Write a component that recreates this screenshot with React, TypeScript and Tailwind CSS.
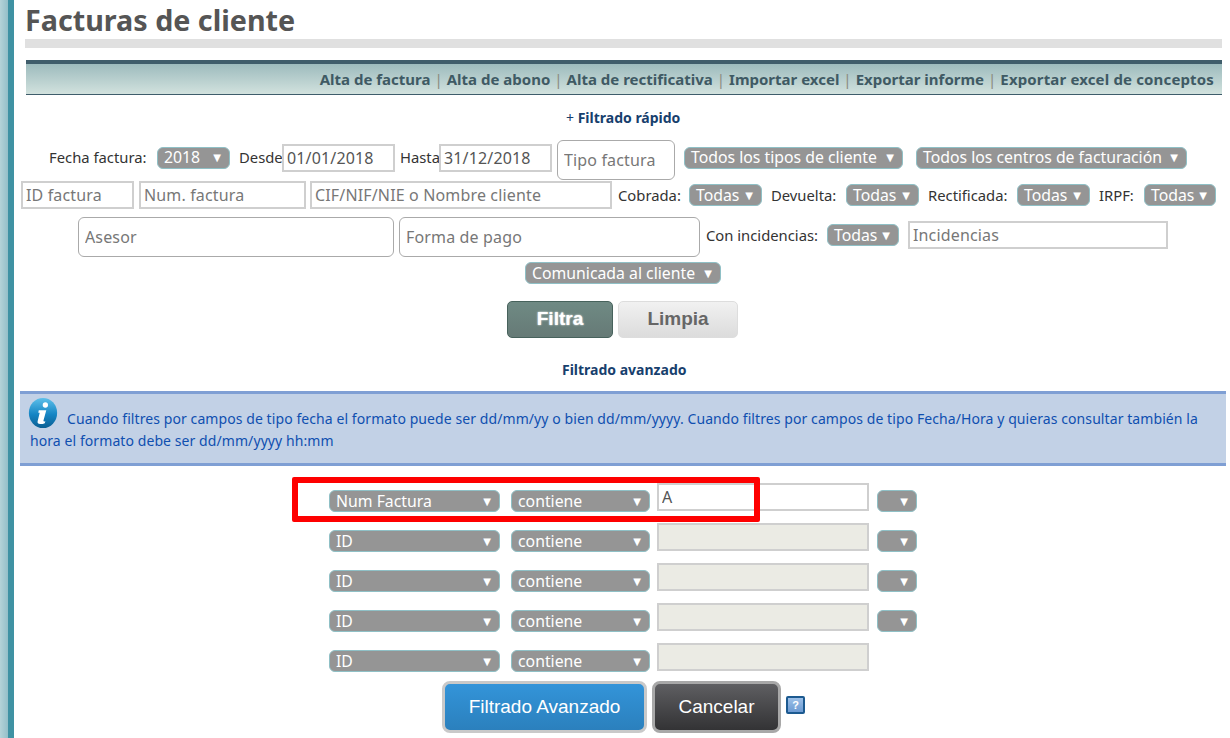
const FONT = "font-['Tahoma','Noto_Sans','DejaVu_Sans',sans-serif]";
const ARIAL = "font-['Liberation_Sans',Arial,sans-serif]";

function Pick({ text, className }: { text: string; className: string }) {
  return (
    <div
      className={`flex h-[22px] shrink-0 items-center justify-between rounded-[6px] border border-[#8fc0c6] bg-[#959595] pl-[6px] pr-[8px] pt-[1px] text-[15.8px] text-white ${className}`}
    >
      <span className="whitespace-nowrap">{text}</span>
      <span className="mb-[2px] text-[10px] leading-none">▼</span>
    </div>
  );
}

function Label({ text, className }: { text: string; className: string }) {
  return <span className={`shrink-0 whitespace-nowrap text-[14.8px] text-[#333] ${className}`}>{text}</span>;
}

function Field({ text, hint, className, disabled }: { text?: string; hint?: string; className: string; disabled?: boolean }) {
  return (
    <input
      readOnly
      defaultValue={text}
      placeholder={hint}
      className={`h-[28px] shrink-0 border-2 border-[#cfcfcf] px-[3px] text-[16px] tracking-[0.15px] text-[#555] outline-none placeholder:text-[#777] ${
        disabled ? "bg-[#ebebe4]" : "bg-white"
      } ${className}`}
    />
  );
}

function RoundField({ hint, className }: { hint: string; className: string }) {
  return (
    <input
      readOnly
      placeholder={hint}
      className={`h-[40px] shrink-0 rounded-[6px] border border-[#aaa] bg-white px-[6px] text-[16px] tracking-[0.15px] outline-none placeholder:text-[#777] ${className}`}
    />
  );
}

function AdvancedRow({ field, value, disabled, last }: { field: string; value?: string; disabled?: boolean; last?: boolean }) {
  return (
    <div className="flex h-[40px] items-start pl-[317px]">
      <Pick text={field} className="mt-[7px] w-[171px]" />
      <Pick text="contiene" className="ml-[11px] mt-[7px] w-[139px]" />
      <Field text={value} disabled={disabled} className="ml-[7px] w-[212px]" />
      {!last && <Pick text="" className="ml-[8px] mt-[7px] w-[40px]" />}
    </div>
  );
}

export default function App() {
  return (
    <div className={`flex h-[738px] w-[1230px] overflow-hidden bg-white ${FONT}`}>
      <div className="flex h-full w-[14px] shrink-0">
        <div className="h-full w-[8px] bg-gradient-to-r from-[#b4d3d8] to-[#94bfc8]" />
        <div className="h-full w-[6px] bg-[#3f92a3]" />
      </div>

      <div className="relative -ml-[2px] min-w-0 flex-1">
        {/* Title */}
        <h1 className="ml-[13px] h-[39px] text-[28.7px] font-bold leading-[40px] text-[#555]">Facturas de cliente</h1>
        <div className="ml-[13px] mr-[8px] h-[9px] bg-[#e0e0e0]" />

        {/* Actions */}
        <div className="ml-[14px] mr-[8px] mt-[12px] flex h-[35px] items-center justify-end border-b border-t-4 border-b-[#3f5d6b] border-t-[#3f5d6b] bg-gradient-to-b from-[#9dbbbd] to-[#d2e2de] pr-[8px] text-[15px] font-bold text-[#3f5a64]">
          <span>Alta de factura</span>
          <span className="mx-[4px] font-normal text-[#8a8a80]">|</span>
          <span>Alta de abono</span>
          <span className="mx-[4px] font-normal text-[#8a8a80]">|</span>
          <span>Alta de rectificativa</span>
          <span className="mx-[4px] font-normal text-[#8a8a80]">|</span>
          <span>Importar excel</span>
          <span className="mx-[4px] font-normal text-[#8a8a80]">|</span>
          <span>Exportar informe</span>
          <span className="mx-[4px] font-normal text-[#8a8a80]">|</span>
          <span className="tracking-[0.15px]">Exportar excel de conceptos</span>
        </div>

        <p className="mt-[14px] h-[18px] pl-[554px] text-[14px] font-bold leading-[18px] text-[#17406d]">
          <span className="font-normal">+</span> Filtrado rápido
        </p>

        {/* Quick filters */}
        <div className="mt-[12px] flex h-[41px] items-center pl-[37px]">
          <Label text="Fecha factura:" className="mb-[4px] w-[108px]" />
          <Pick text="2018" className="mb-[4px] w-[73px]" />
          <Label text="Desde" className="mb-[4px] ml-[9px] w-[43px]" />
          <Field text="01/01/2018" className="mb-[4px] w-[113px] tracking-[0.9px]" />
          <Label text="Hasta" className="mb-[4px] ml-[5px] w-[39px]" />
          <Field text="31/12/2018" className="mb-[4px] w-[113px] tracking-[0.9px]" />
          <RoundField hint="Tipo factura" className="ml-[5px] w-[118px]" />
          <Pick text="Todos los tipos de cliente" className="mb-[4px] ml-[9px] w-[219px]" />
          <Pick text="Todos los centros de facturación" className="mb-[4px] ml-[13px] w-[271px]" />
        </div>
        <div className="mt-[1px] flex h-[28px] items-center pl-[9px]">
          <Field hint="ID factura" className="w-[113px]" />
          <Field hint="Num. factura" className="ml-[5px] w-[167px]" />
          <Field hint="CIF/NIF/NIE o Nombre cliente" className="ml-[4px] w-[302px]" />
          <Label text="Cobrada:" className="ml-[6px] w-[71px]" />
          <Pick text="Todas" className="w-[73px]" />
          <Label text="Devuelta:" className="ml-[9px] w-[75px]" />
          <Pick text="Todas" className="w-[73px]" />
          <Label text="Rectificada:" className="ml-[9px] w-[89px]" />
          <Pick text="Todas" className="w-[73px]" />
          <Label text="IRPF:" className="ml-[9px] w-[45px]" />
          <Pick text="Todas" className="w-[72px]" />
        </div>
        <div className="mt-[8px] flex h-[40px] items-center pl-[66px]">
          <RoundField hint="Asesor" className="w-[316px]" />
          <RoundField hint="Forma de pago" className="ml-[5px] w-[301px]" />
          <Label text="Con incidencias:" className="mb-[4px] ml-[6px] w-[121px]" />
          <Pick text="Todas" className="mb-[4px] w-[72px]" />
          <Field hint="Incidencias" className="mb-[4px] ml-[9px] w-[260px]" />
        </div>
        <div className="mt-[5px] flex pl-[513px]">
          <Pick text="Comunicada al cliente" className="w-[196px]" />
        </div>

        {/* Quick filter buttons */}
        <div className={`mt-[17px] flex pl-[495px] ${ARIAL}`}>
          <button className="h-[37px] w-[106px] rounded-[5px] border border-[#47625c] bg-gradient-to-b from-[#6f8a84] to-[#667a76] text-[19px] font-bold text-white [text-shadow:0_0_2px_#fff]">
            Filtra
          </button>
          <button className="ml-[5px] h-[37px] w-[120px] rounded-[5px] border border-[#ddd] bg-gradient-to-b from-[#f1f1f1] to-[#dcdcdc] text-[19px] font-bold text-[#666]">
            Limpia
          </button>
        </div>

        <p className="mt-[23px] h-[18px] pl-[550px] text-[14px] font-bold leading-[18px] text-[#17406d]">Filtrado avanzado</p>

        {/* Info */}
        <div className="ml-[8px] mr-[4px] mt-[12px] h-[75px] border-y-[3px] border-[#7f9fd4] bg-[#c2d1e6] pl-[7px] text-[14px] leading-[22px] tracking-[0.08px] text-[#0f4fb0]">
          <div className="flex items-start pt-[3px]">
            <svg viewBox="0 0 32 34" className="h-[32px] w-[32px] shrink-0">
              <defs>
                <linearGradient id="info-ball" x1="0" y1="0" x2="0" y2="1">
                  <stop offset="0" stopColor="#5ec0ea" />
                  <stop offset="0.55" stopColor="#1585c4" />
                  <stop offset="1" stopColor="#0b5f93" />
                </linearGradient>
              </defs>
              <ellipse cx="16" cy="17" rx="15" ry="16" fill="url(#info-ball)" />
              <circle cx="18.5" cy="8.5" r="2.8" fill="#fff" />
              <path d="M11.5 14 h8 l-3 11 q-.3 1.3 2 .8 l-.6 2 q-2 1-5 1 q-3.2-.2-2.6-3 l2.2-9 h-1.5z" fill="#fff" />
            </svg>
            <p className="mt-[11px] whitespace-nowrap pl-[8px]">
              Cuando filtres por campos de tipo fecha el formato puede ser dd/mm/yy o bien dd/mm/yyyy. Cuando filtres por campos de tipo Fecha/Hora y quieras consultar también la
            </p>
          </div>
          <p className="ml-[3px]">hora el formato debe ser dd/mm/yyyy hh:mm</p>
        </div>

        {/* Advanced filters */}
        <div className="mt-[17px]">
          <AdvancedRow field="Num Factura" value="A" />
          <AdvancedRow field="ID" disabled />
          <AdvancedRow field="ID" disabled />
          <AdvancedRow field="ID" disabled />
          <AdvancedRow field="ID" disabled last />
        </div>

        <div className={`-mt-[2px] flex items-center pl-[430px] ${ARIAL}`}>
          <button className="h-[52px] w-[205px] rounded-[8px] border-[3px] border-[#c9c9c9] bg-gradient-to-b from-[#3394d9] to-[#2b80bd] text-[19px] text-white">
            Filtrado Avanzado
          </button>
          <button className="ml-[5px] h-[52px] w-[129px] rounded-[8px] border-[3px] border-[#a8a8a8] bg-gradient-to-b from-[#5f5f62] to-[#333335] text-[19px] text-white">
            Cancelar
          </button>
          <span className="mb-[4px] ml-[5px] flex h-[18px] w-[19px] items-center justify-center rounded-[2px] border-2 border-[#1c5a90] bg-gradient-to-b from-[#9cc0e8] to-[#6c9ad2] text-[11px] font-bold leading-none text-white">
            ?
          </span>
        </div>

        {/* Highlight drawn over the first row */}
        <div className="absolute left-[280px] top-[477px] h-[45px] w-[468px] rounded-[2px] border-[6px] border-[#fe0000]" />
      </div>
    </div>
  );
}
